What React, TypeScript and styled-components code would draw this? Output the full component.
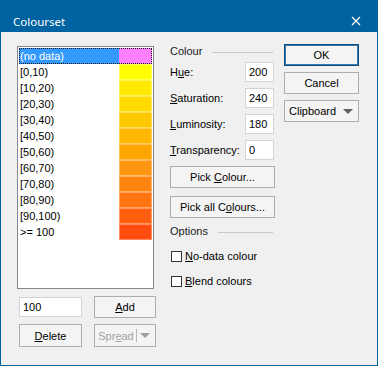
import React from "react";
import styled, { createGlobalStyle } from "styled-components";

const GlobalStyle = createGlobalStyle`
  html, body {
    margin: 0;
    padding: 0;
    background: #ffffff;
  }
  body {
    font-family: "Liberation Sans", Arial, sans-serif;
    font-size: 11px;
    color: #000;
  }
`;

const rows = [
  { label: "(no data)", color: "#ff80ff" },
  { label: "[0,10)", color: "#ffff00" },
  { label: "[10,20)", color: "#ffea00" },
  { label: "[20,30)", color: "#ffda00" },
  { label: "[30,40)", color: "#ffc900" },
  { label: "[40,50)", color: "#ffb700" },
  { label: "[50,60)", color: "#ffa500" },
  { label: "[60,70)", color: "#ff9510" },
  { label: "[70,80)", color: "#ff8510" },
  { label: "[80,90)", color: "#ff7310" },
  { label: "[90,100)", color: "#ff6010" },
  { label: ">= 100", color: "#ff4c10" },
];

export default function App() {
  return (
    <>
      <GlobalStyle />
      <Window>
        <TitleBar>
          <Title>Colourset</Title>
          <CloseIcon width="10" height="10" viewBox="0 0 10 10">
            <path d="M1 1 L9 9 M9 1 L1 9" stroke="#fff" strokeWidth="1.3" />
          </CloseIcon>
        </TitleBar>
        <Body>
          <LeftColumn>
            <ListBox>
              {rows.map((r, i) => (
                <ListRow key={r.label} $selected={i === 0}>
                  <RowLabel $selected={i === 0}>{r.label}</RowLabel>
                  <Swatch $color={r.color} $plain={i === 0} />
                </ListRow>
              ))}
            </ListBox>
            <BottomGrid>
              <TextBox $width={63}>100</TextBox>
              <Button><u>A</u>dd</Button>
              <Button><u>D</u>elete</Button>
              <SplitButton disabled>
                <SplitLabel>Spr<u>e</u>ad</SplitLabel>
                <SplitDivider />
                <Caret $color="#a0a0a0" />
              </SplitButton>
            </BottomGrid>
          </LeftColumn>

          <MiddleColumn>
            <GroupHeader>
              <span>Colour</span>
              <GroupLine />
            </GroupHeader>
            <FieldRow>
              <span>H<u>u</u>e:</span>
              <TextBox $width={29}>200</TextBox>
            </FieldRow>
            <FieldRow>
              <span><u>S</u>aturation:</span>
              <TextBox $width={29}>240</TextBox>
            </FieldRow>
            <FieldRow>
              <span><u>L</u>uminosity:</span>
              <TextBox $width={29}>180</TextBox>
            </FieldRow>
            <FieldRow>
              <span><u>T</u>ransparency:</span>
              <TextBox $width={29}>0</TextBox>
            </FieldRow>
            <WideButton $top={6}>Pick <u>C</u>olour...</WideButton>
            <WideButton $top={8}>Pick all C<u>o</u>lours...</WideButton>
            <GroupHeader $top={6}>
              <span>Options</span>
              <GroupLine />
            </GroupHeader>
            <CheckRow $top={11}>
              <CheckBox />
              <span><u>N</u>o-data colour</span>
            </CheckRow>
            <CheckRow $top={11}>
              <CheckBox />
              <span><u>B</u>lend colours</span>
            </CheckRow>
          </MiddleColumn>

          <RightColumn>
            <Button $default>OK</Button>
            <Button>Cancel</Button>
            <DropButton>
              <span>Clipboard</span>
              <Caret $color="#606060" />
            </DropButton>
          </RightColumn>
        </Body>
      </Window>
    </>
  );
}

const Window = styled.div`
  width: 378px;
  height: 366px;
  box-sizing: border-box;
  background: #f0f0f0;
  border: 1px solid #0063a1;
  border-top: none;
  display: flex;
  flex-direction: column;
`;

const TitleBar = styled.div`
  height: 32px;
  margin: 0 -1px;
  background: #0063a1;
  display: flex;
  align-items: center;
  padding: 10px 17px 0 13px;
  box-sizing: border-box;
  color: #fff;
`;

const Title = styled.div`
  flex: 1;
  font-family: "Noto Sans", "Open Sans", sans-serif;
  font-size: 11.5px;
`;

const CloseIcon = styled.svg`
  display: block;
`;

const Body = styled.div`
  flex: 1;
  display: flex;
  align-items: flex-start;
  padding: 14px 0 0 16px;
`;

const LeftColumn = styled.div`
  width: 139px;
  display: flex;
  flex-direction: column;
`;

const ListBox = styled.div`
  width: 137px;
  height: 243px;
  box-sizing: border-box;
  background: #fff;
  border: 1px solid #828790;
  padding: 1px;
`;

const ListRow = styled.div<{ $selected?: boolean }>`
  height: 16px;
  display: flex;
  outline: ${(p) => (p.$selected ? "1px dotted #1a1a1a" : "none")};
  outline-offset: -1px;
`;

const RowLabel = styled.div<{ $selected?: boolean }>`
  flex: 1;
  padding-left: 1px;
  line-height: 16px;
  background: ${(p) => (p.$selected ? "#3399ff" : "transparent")};
  color: ${(p) => (p.$selected ? "#fff" : "#000")};
`;

const Swatch = styled.div<{ $color: string; $plain?: boolean }>`
  width: 33px;
  background: ${(p) => p.$color};
  box-shadow: ${(p) => (p.$plain ? "none" : "inset 0 0 0 1px rgba(255,255,255,0.35)")};
`;

const BottomGrid = styled.div`
  margin: 7px 0 0 2px;
  display: grid;
  grid-template-columns: 63px 62px;
  grid-template-rows: 22px 23px;
  column-gap: 12px;
  row-gap: 6px;
  align-items: center;
`;

const TextBox = styled.div<{ $width: number }>`
  width: ${(p) => p.$width}px;
  height: 20px;
  box-sizing: border-box;
  border: 1px solid #d4d4d4;
  background: #fff;
  padding-left: 3px;
  line-height: 18px;
`;

const Button = styled.button<{ $default?: boolean }>`
  height: 100%;
  min-height: 22px;
  width: 100%;
  box-sizing: border-box;
  margin: 0;
  padding: 0;
  font: inherit;
  color: #000;
  background: #f4f4f4;
  border: 1px solid ${(p) => (p.$default ? "#0e4e80" : "#adadad")};
  box-shadow: ${(p) => (p.$default ? "inset 0 0 0 1px #3b77a6" : "none")};
`;

const SplitButton = styled.button`
  height: 100%;
  width: 100%;
  box-sizing: border-box;
  margin: 0;
  padding: 0 5px 0 0;
  font: inherit;
  color: #a0a0a0;
  background: #f4f4f4;
  border: 1px solid #adadad;
  display: flex;
  align-items: center;
`;

const SplitLabel = styled.span`
  flex: 1;
  text-align: center;
  padding-left: 1px;
`;

const SplitDivider = styled.span`
  width: 1px;
  height: 13px;
  background: #b8b8b8;
  margin-right: 3px;
`;

const Caret = styled.span<{ $color: string }>`
  width: 0;
  height: 0;
  border-left: 5px solid transparent;
  border-right: 5px solid transparent;
  border-top: 5px solid ${(p) => p.$color};
`;

const MiddleColumn = styled.div`
  width: 105px;
  margin-left: 14px;
  display: flex;
  flex-direction: column;
`;

const GroupHeader = styled.div<{ $top?: number }>`
  height: 14px;
  margin-top: ${(p) => (p.$top ?? -2)}px;
  display: flex;
  align-items: center;
  color: #1a1a1a;
`;

const GroupLine = styled.span`
  flex: 1;
  height: 1px;
  margin: 3px 2px 0 10px;
  background: #c8c8c8;
`;

const FieldRow = styled.div`
  height: 20px;
  margin-top: 4px;
  display: flex;
  align-items: center;
  justify-content: space-between;
  padding-right: 1px;

  & + & {
    margin-top: 6px;
  }
`;

const WideButton = styled(Button)<{ $top: number }>`
  height: 22px;
  margin-top: ${(p) => p.$top}px;
`;

const CheckRow = styled.div<{ $top: number }>`
  height: 14px;
  margin-top: ${(p) => p.$top}px;
  display: flex;
  align-items: center;
  gap: 3px;
  padding-left: 1px;
`;

const CheckBox = styled.span`
  width: 11px;
  height: 11px;
  box-sizing: border-box;
  border: 1px solid #333;
  background: #fff;
`;

const RightColumn = styled.div`
  width: 75px;
  margin: -2px 0 0 9px;
  display: flex;
  flex-direction: column;
  gap: 6px;

  & > * {
    height: 22px;
  }
`;

const DropButton = styled.button`
  height: 22px;
  box-sizing: border-box;
  margin: 0;
  padding: 0 5px 0 4px;
  font: inherit;
  color: #000;
  background: #f4f4f4;
  border: 1px solid #adadad;
  display: flex;
  align-items: center;
  justify-content: space-between;
`;
